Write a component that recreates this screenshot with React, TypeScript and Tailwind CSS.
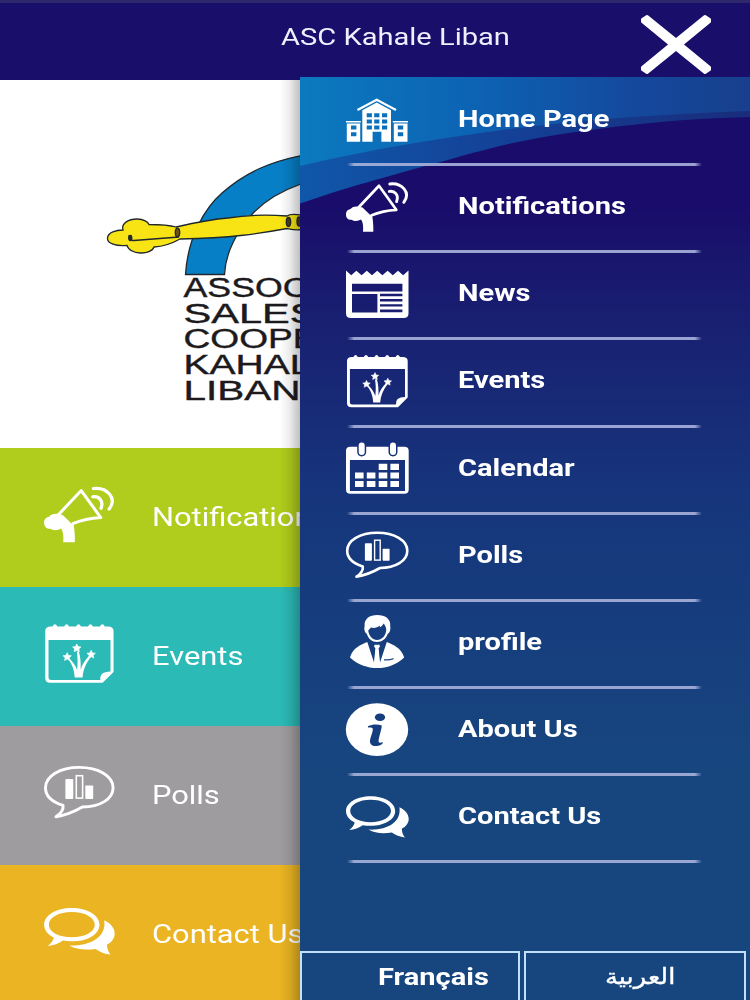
import type { ReactNode } from "react"

function Icon({ children, className }: { children: ReactNode; className: string }) {
  return (
    <svg viewBox="0 0 64 54" fill="currentColor" className={`shrink-0 overflow-visible text-white ${className}`}>
      {children}
    </svg>
  )
}

const home = (
  <>
    <path d="M12.5 16 L31.7 5.8 L51 16" fill="none" stroke="currentColor" strokeWidth="2.2" />
    <path
      fillRule="evenodd"
      d="M17.3 16.2 L31.7 8.6 L46 16.2 V47.8 H36.4 V37.8 H27.6 V47.8 H17.3Z M21.7 19.3h5.2v4h-5.2z M29.2 19.3h5.2v4h-5.2z M37 19.3h5.2v4H37z M21.7 25.4h5.2v4h-5.2z M29.2 25.4h5.2v4h-5.2z M37 25.4h5.2v4H37z M21.7 31.6h5.2v3.8h-5.2z M29.2 31.6h5.2v3.8h-5.2z M37 31.6h5.2v3.8H37z"
    />
    <path
      fillRule="evenodd"
      d="M1 27H15.8V28.5H1z M1.8 29.6H15.2V47.8H1.8z M6 31.6h5.4v4H6z M6 38.2h5.4v4H6z M47.8 27H63V28.5H47.8z M48.8 29.6H62.5V47.8H48.8z M52.8 31.6h5.4v4h-5.4z M52.8 38.2h5.4v4h-5.4z"
    />
  </>
)

const megaphone = (
  <>
    <path d="M13.5 26.5 L34 4.8 L51.3 28.8 Q38 29.5 26 34.5" fill="none" stroke="currentColor" strokeWidth="2.7" strokeLinejoin="round" />
    <path d="M13 25.5 C9 25 6.5 26.5 5.5 28 C2.5 28.5 .8 30.5 1 33.5 C1 37.5 3.5 39 6.5 38.8 C9.5 40.8 13.5 40.2 16 38.6 C17.8 41 18.5 45 18 50.8 H28.3 C28.5 44 28 39 27 33.8 L25 33.8 L17.5 26.5Z" />
    <path d="M44.3 10.4 C49.5 9.5 54.2 14 51.6 20.6" fill="none" stroke="currentColor" strokeWidth="2.9" strokeLinecap="round" />
    <path d="M44.8 3 C56.5 1.5 66.5 11.5 58.8 21.3" fill="none" stroke="currentColor" strokeWidth="2.9" strokeLinecap="round" />
  </>
)

const news = (
  <path
    fillRule="evenodd"
    d="M1 2.6 L6.2 7.2 L11.4 2.8 L16.6 7.2 L21.8 2.8 L27 7.2 L32.2 2.8 L37.4 7.2 L42.6 2.8 L47.8 7.2 L53 2.8 L58.2 7.2 L63.5 2.6 V45.5 Q63.5 50 58.5 50 H6 Q1 50 1 45.5Z M7 15.7V23.4H57.4V15.7z M7 26V44.4H32.4V26z M35 25.8V28.2H57.4V25.8z M35 31V33.4H57.4V31z M35 36.2V38.6H57.4V36.2z M35 41.6V44.2H57.4V41.6z"
  />
)

const star = "M0 -3.6 L1.1 -1.2 L3.7 -.9 L1.8 .9 L2.3 3.3 L0 2.1 L-2.3 3.3 L-1.8 .9 L-3.7 -.9 L-1.1 -1.2Z"

const events = (
  <>
    <path
      fillRule="evenodd"
      d="M7 2 H8.4 Q10.6 -2 12.8 2 H18.8 Q21 -2 23.2 2 H29.4 Q31.6 -2 33.8 2 H40 Q42.2 -2 44.4 2 H50.6 Q52.8 -2 55 2 H57.6 Q62.7 2 62.7 6 V42.6 L53 52.2 H6.5 Q2 52.2 2 48.2 V6 Q2 2 7 2Z M4.9 14 V47.5 Q4.9 49.6 7 49.6 H51 Q49.8 42.3 60 42 V14Z"
    />
    <path d="M28.2 47.4 C27.8 40 25.5 35.5 22.6 31.5 L24 31 C27.3 34.5 29.5 38 30.3 41 C31 35 30.9 30 30 24.5 L31.8 24.3 C33.3 29 33.7 34 33.5 40.5 C34.6 36 37.3 31.8 41.2 28 L42.5 29.2 C38.2 35 35.6 40.5 35.2 47.4Z" />
    <g stroke="currentColor" strokeWidth=".6">
      <path d={star} transform="translate(21.5 29)" />
      <path d={star} transform="translate(30 21.2)" />
      <path d={star} transform="translate(42.8 26.8)" />
    </g>
  </>
)

const calendar = (
  <>
    <path
      fillRule="evenodd"
      d="M5.5 4.8 H12.2 V9.5 C12.2 16 21.2 16 21.2 9.5 V4.8 H43.5 V9.5 C43.5 16 52.5 16 52.5 9.5 V4.8 H59.3 Q63.7 4.8 63.7 8.8 V47.8 Q63.7 51.8 59.3 51.8 H5.5 Q1 51.8 1 47.8 V8.8 Q1 4.8 5.5 4.8Z M4.9 18V48.9H60V18z"
    />
    <rect x="13.7" y=".6" width="6" height="12.4" rx="3" />
    <rect x="45" y=".6" width="6" height="12.4" rx="3" />
    <path d="M33.7 21.7h8.6V28h-8.6z M45.4 21.7H54V28h-8.6z M10 30.4h8.6v6.1H10z M21.8 30.4h8.6v6.1h-8.6z M33.7 30.4h8.6v6.1h-8.6z M45.4 30.4H54v6.1h-8.6z M10 38.9h8.6V45H10z M21.8 38.9h8.6V45h-8.6z M33.7 38.9h8.6V45h-8.6z M45.4 38.9H54V45h-8.6z" />
  </>
)

const polls = (
  <>
    <path
      d="M17.8 37.5 C8 34.5 2.2 29 2.2 21.8 C2.2 11.5 15 3.8 32.2 3.8 C49.5 3.8 62.3 11.5 62.3 21.8 C62.3 32 50.5 39 35 39 C28 43 20 46.3 11.5 47.7 C16 44.8 18.4 41.5 17.8 37.5Z"
      fill="none"
      stroke="currentColor"
      strokeWidth="2.6"
      strokeLinejoin="round"
    />
    <rect x="19.9" y="14.2" width="7" height="17.6" rx=".8" />
    <rect x="29.6" y="11.2" width="5.6" height="19.9" fill="none" stroke="currentColor" strokeWidth="1.4" />
    <rect x="37.6" y="19.8" width="7" height="12" rx=".8" />
  </>
)

const profile = (
  <>
    <path
      fillRule="evenodd"
      d="M32.3 -.9 C40 -.9 46 3 45.2 10 C46 15 44 17 42.8 17.8 C41 23 37 26 32 26 C27 26 23.5 23 21.7 17.8 C19.5 16.5 18.8 13 19.6 10 C19 3 24.5 -.9 32.3 -.9Z M23.2 14.5 C24 20 27.5 24 32 24 C36.8 24 40.8 20 41.3 13.8 C41 11 40 9 38.6 7.5 C38 9 36.5 10.5 34.5 11.5 L35.2 9.6 C32 12 29 12.3 26 11.6Z"
    />
    <path
      fillRule="evenodd"
      d="M22.3 26 C16 28.5 7.5 32 5 41.5 C20 55.5 44 55.8 59.2 41.5 C56.5 32 48 28.5 41.8 26 L35 46.5 L33.6 32.5 L35 30 H29 L30.4 32.5 L29 46.5Z M39 43.2 Q44.5 43.8 48.5 42 V43.2 Q44 45 39 44.4Z"
    />
    <path d="M29.2 28.8 H34.8 L34 32 H30Z" />
    <path d="M30.6 33.2 H33.4 L34.6 47.5 L32 50.5 L29.4 47.5Z" />
  </>
)

const info = (
  <>
    <ellipse cx="32" cy="25.6" rx="31.2" ry="26.4" />
    <g className="text-[#163d7e]">
      <ellipse cx="35" cy="13.2" rx="5.1" ry="3.8" fill="currentColor" />
      <path
        fill="currentColor"
        d="M22.8 22.3 C27.5 20 33 19.8 36.8 21.6 C36.5 26.5 33.4 34 33.6 37.6 C33.7 39.3 36 38.7 38 38.2 C37.7 42 26 44.5 25 38.2 C24.6 34.5 28 28.5 27.8 24.8 C27.5 23.4 25.4 23.2 23.2 23.5Z"
      />
    </g>
  </>
)

const contact = (
  <>
    <path
      fillRule="evenodd"
      d="M25.6 5.2 C39.5 5.2 50.2 11.7 50.2 20 C50.2 28.5 39.5 34.8 25.6 34.8 C23 34.8 20 34.6 17.8 34.2 C14 36.8 9.5 38.8 4.3 38.9 C7.2 36.6 9 34.3 9.7 31.4 C4 28.8 1 24.6 1 20 C1 11.7 11.7 5.2 25.6 5.2Z M25.6 8.8 C13.8 8.8 5.2 13.7 5.2 20 C5.2 26.2 13.8 31.2 25.6 31.2 C37.4 31.2 46 26.2 46 20 C46 13.7 37.4 8.8 25.6 8.8Z"
    />
    <path d="M54.4 16.2 C60 18.8 63.7 23 63.7 28 C63.7 32 61 35.7 56.8 37.7 C57 41.5 58 44 60 46.6 C55 46 50.3 44.3 46.8 41.6 C38.5 42.7 29.6 42.5 23.6 38.6 C42 39.5 56.8 31 54.4 16.2Z" />
  </>
)

const menu = [
  { label: "Home Page", icon: home },
  { label: "Notifications", icon: megaphone },
  { label: "News", icon: news },
  { label: "Events", icon: events },
  { label: "Calendar", icon: calendar },
  { label: "Polls", icon: polls },
  { label: "profile", icon: profile },
  { label: "About Us", icon: info },
  { label: "Contact Us", icon: contact },
]

const tiles = [
  { label: "Notifications", icon: megaphone, color: "bg-[#b0cc1c]" },
  { label: "Events", icon: events, color: "bg-[#2bbab6]" },
  { label: "Polls", icon: polls, color: "bg-[#9f9c9f]" },
  { label: "Contact Us", icon: contact, color: "bg-[#eab422]" },
]

function Logo() {
  const lines = [
    { text: "ASSOC", y: 215.8, length: 125 },
    { text: "SALES", y: 241.6, length: 134 },
    { text: "COOPE", y: 267.2, length: 134 },
    { text: "KAHAL", y: 293, length: 128 },
    { text: "LIBAN", y: 318.6, length: 117 },
  ]

  return (
    <svg viewBox="0 0 300 367" className="h-[367px] w-[300px]" stroke="#20282c" strokeWidth="1.3">
      <path d="M185.5 193.5 C188 154 206 126 222 112 C247 90 273 80 304 74 V102 C276 111 254 126 240 149 C230 165 225 179 224.5 193.5Z" fill="#077fc7" />
      <path
        d="M107.5 157 C108 151.5 116 149 123 149 C121 142 129 138 137 138 C144 138 148 141 149 143.5 C160 143.5 169 144 176 146 C198 141 215 138 228 137 C250 133.5 268 133.5 287 135 C291 132 296 134 304 134 V148 C297 150 292 148.5 287 147.5 C260 152.5 232 157 180 158 C172 162.5 163 165.5 154 166 C151 174.5 130 174 127 164.5 C116 165.5 107 162.5 107.5 157Z"
        fill="#f8e414"
      />
      <path d="M129.5 154 Q128 160 134 159.5 L179 156" fill="none" strokeWidth="1.6" />
      <ellipse cx="130.3" cy="157" rx="1.5" ry="2.6" fill="#20282c" />
      <ellipse cx="177.5" cy="151.5" rx="2.2" ry="4.3" fill="#6b5310" />
      <ellipse cx="288.5" cy="141" rx="2.2" ry="4.5" fill="#4b3c10" />
      <ellipse cx="299" cy="140.5" rx="2" ry="4.5" fill="#4b3c10" />
      <g stroke="#1c1a1d" strokeWidth=".4" fill="#1c1a1d" fontFamily="'Liberation Sans', Arial, sans-serif" fontSize="27">
        {lines.map((line) => (
          <text key={line.text} x="183.5" y={line.y} textLength={line.length} lengthAdjust="spacingAndGlyphs">
            {line.text}
          </text>
        ))}
      </g>
    </svg>
  )
}

function Waves() {
  return (
    <svg viewBox="0 0 450 130" className="absolute top-0 left-0 h-[130px] w-[450px]">
      <defs>
        <linearGradient id="wave-light" x1="0" y1="0" x2="1" y2="0">
          <stop offset="0" stopColor="#0b7abf" />
          <stop offset=".4" stopColor="#0d62b3" />
          <stop offset=".75" stopColor="#14489c" />
          <stop offset="1" stopColor="#183f8d" />
        </linearGradient>
        <linearGradient id="wave-dark" x1="0" y1="0" x2="1" y2="0">
          <stop offset="0" stopColor="#1057a9" />
          <stop offset=".5" stopColor="#143f95" />
          <stop offset="1" stopColor="#192d7b" />
        </linearGradient>
      </defs>
      <path d="M0 0 H450 V40 C410 41 380 43 350 46 C305 50.5 265 56 233 62 C195 69 165 78 137 86 C85 100 45 111 0 126.5Z" fill="url(#wave-dark)" />
      <path d="M0 0 H450 V34 C390 36 340 39 283 44 C240 48 200 53 163 58.5 C105 67 55 76 0 89Z" fill="url(#wave-light)" />
    </svg>
  )
}

export default function App() {
  return (
    <div className="relative h-[1000px] w-[750px] overflow-hidden bg-white font-['Roboto',sans-serif] text-white">
      {/* home screen */}
      <header className="flex h-20 border-t-[3px] border-[#2c286b] bg-[#190f6b] pl-[281px]">
        <h1 className="origin-left scale-x-[1.187] pt-[18px] text-[24.5px] leading-8 whitespace-nowrap text-[#f1efff]">ASC Kahale Liban</h1>
      </header>
      <div className="flex w-[300px] flex-col overflow-hidden">
        <div className="h-[368px] pt-px">
          <Logo />
        </div>
        {tiles.map((tile) => (
          <div key={tile.label} className={`flex h-[139px] shrink-0 items-center pb-[5px] pl-[43px] ${tile.color}`}>
            <Icon className="h-[61px] w-[72px]">{tile.icon}</Icon>
            <span className="ml-[37px] origin-left scale-x-[1.21] pt-[3px] text-[25.5px] leading-8 whitespace-nowrap">{tile.label}</span>
          </div>
        ))}
      </div>

      <button className="absolute top-[14px] right-[38px]" aria-label="Close">
        <svg viewBox="0 0 72 61" className="h-[61px] w-[72px]" fill="white" stroke="white" strokeWidth="3" strokeLinejoin="round">
          <path d="M2.5 5.5 L7 2.5 L36 26 L65 2.5 L69.5 5.5 V7.5 L41.5 30.5 L69.5 53.5 V55.5 L65 58.5 L36 35 L7 58.5 L2.5 55.5 V53.5 L30.5 30.5 L2.5 7.5Z" />
        </svg>
      </button>

      {/* drawer */}
      <div className="absolute top-20 bottom-0 left-[280px] w-5 bg-linear-to-r from-black/0 via-black/8 to-black/25" />
      <nav className="absolute top-[77px] right-0 flex h-[923px] w-[450px] flex-col bg-linear-to-b from-[#190c6a] from-14% via-[#16357c] via-45% to-[#17467f] to-75%">
        <Waves />
        <div className="relative flex flex-col pt-[2px] pr-12 pl-[45px]">
          {menu.map((item) => (
            <div key={item.label} className="flex h-[87.15px] flex-col">
              <div className="flex flex-1 items-center">
                <Icon className="mb-px h-[54px] w-16">{item.icon}</Icon>
                <span className="ml-[49px] origin-left scale-x-[1.21] pb-1 text-2xl font-bold whitespace-nowrap">{item.label}</span>
              </div>
              <div className="ml-0.5 h-[3px] bg-linear-to-r from-white/0 via-[#a9b2dc]/90 via-2% to-[#a9b2dc]/90 to-98% mask-r-from-98%" />
            </div>
          ))}
        </div>
        <div className="relative mt-auto flex h-[49px] gap-1 pr-1 text-2xl leading-8">
          <div className="flex flex-1 border-2 border-b-0 border-[#c3e0fa] pt-2 pl-[76px]">
            <span className="origin-left scale-x-[1.21] font-bold">Français</span>
          </div>
          <div className="flex flex-1 border-2 border-b-0 border-[#c3e0fa] pt-2 pl-[79px]">
            <span lang="ar" className="origin-left scale-x-[1.17] font-['DejaVu_Sans',sans-serif] text-[22px] [-webkit-text-stroke:0.4px_white]">
              العربية
            </span>
          </div>
        </div>
      </nav>
    </div>
  )
}
